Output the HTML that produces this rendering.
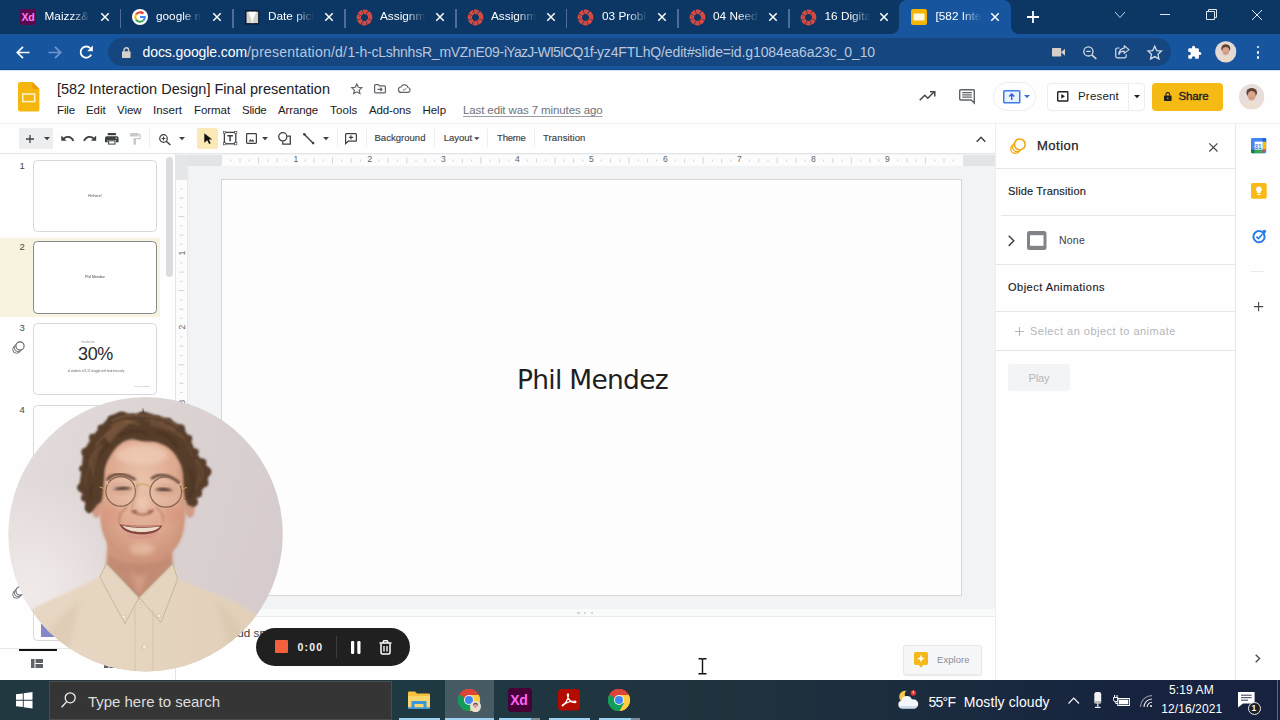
<!DOCTYPE html>
<html><head><meta charset="utf-8"><title>Slides</title>
<style>
*{box-sizing:border-box;margin:0;padding:0}
html,body{width:1280px;height:720px;overflow:hidden;background:#fefefe;font-family:"Liberation Sans",sans-serif;}
.a{position:absolute}
.t{position:absolute;white-space:nowrap;line-height:1.15}
svg{position:absolute;overflow:visible}
#tabbar{left:0;top:0;width:1280px;height:34px;background:#0c3663}
#navbar{left:0;top:34px;width:1280px;height:36.500px;background:#17569f}
#omni{left:108px;top:38px;width:1063px;height:28px;border-radius:14px;background:#15467f}
.sep{top:8.5px;width:1.5px;height:19px;background:#4f6d98}
#acttab{left:899px;top:0;width:112px;height:34px;background:#17569f;border-radius:8px 8px 0 0}
.tsep{top:129px;width:1px;height:18px;background:#eceef0}
.hl{height:1px;background:#e3e5e8}
</style></head><body>
<!-- CHROME -->
<div class="a" id="tabbar"></div>
<div class="a" id="acttab"></div>
<div class="a" id="navbar"></div>
<div class="a" id="omni"></div>
<div class="a sep" style="left:119.5px"></div>
<div class="a sep" style="left:232.0px"></div>
<div class="a sep" style="left:344.0px"></div>
<div class="a sep" style="left:455.2px"></div>
<div class="a sep" style="left:565.5px"></div>
<div class="a sep" style="left:677.0px"></div>
<div class="a sep" style="left:788.0px"></div>
<svg style="left:101.0px;top:13px" width="8" height="8" viewBox="0 0 8 8"><path d="M0.8 0.8L7.2 7.2M7.2 0.8L0.8 7.2" stroke="#fff" stroke-width="1.5" stroke-linecap="square"/></svg>
<svg style="left:213.0px;top:13px" width="8" height="8" viewBox="0 0 8 8"><path d="M0.8 0.8L7.2 7.2M7.2 0.8L0.8 7.2" stroke="#fff" stroke-width="1.5" stroke-linecap="square"/></svg>
<svg style="left:325.0px;top:13px" width="8" height="8" viewBox="0 0 8 8"><path d="M0.8 0.8L7.2 7.2M7.2 0.8L0.8 7.2" stroke="#fff" stroke-width="1.5" stroke-linecap="square"/></svg>
<svg style="left:436.0px;top:13px" width="8" height="8" viewBox="0 0 8 8"><path d="M0.8 0.8L7.2 7.2M7.2 0.8L0.8 7.2" stroke="#fff" stroke-width="1.5" stroke-linecap="square"/></svg>
<svg style="left:546.5px;top:13px" width="8" height="8" viewBox="0 0 8 8"><path d="M0.8 0.8L7.2 7.2M7.2 0.8L0.8 7.2" stroke="#fff" stroke-width="1.5" stroke-linecap="square"/></svg>
<svg style="left:658.0px;top:13px" width="8" height="8" viewBox="0 0 8 8"><path d="M0.8 0.8L7.2 7.2M7.2 0.8L0.8 7.2" stroke="#fff" stroke-width="1.5" stroke-linecap="square"/></svg>
<svg style="left:769.0px;top:13px" width="8" height="8" viewBox="0 0 8 8"><path d="M0.8 0.8L7.2 7.2M7.2 0.8L0.8 7.2" stroke="#fff" stroke-width="1.5" stroke-linecap="square"/></svg>
<svg style="left:880.0px;top:13px" width="8" height="8" viewBox="0 0 8 8"><path d="M0.8 0.8L7.2 7.2M7.2 0.8L0.8 7.2" stroke="#fff" stroke-width="1.5" stroke-linecap="square"/></svg>
<svg style="left:991.0px;top:13px" width="8" height="8" viewBox="0 0 8 8"><path d="M0.8 0.8L7.2 7.2M7.2 0.8L0.8 7.2" stroke="#fff" stroke-width="1.5" stroke-linecap="square"/></svg>
<div class="a" style="left:20px;top:9px;width:16px;height:15.600px;background:#5a0a4c;border-radius:2px"></div>
<span class="t" style="left:21.600px;top:10.800px;font-size:10.500px;font-weight:bold;color:#ff7df3;letter-spacing:-0.300px">Xd</span>
<svg style="left:132px;top:9px" width="16" height="16" viewBox="0 0 16 16"><circle cx="8" cy="8" r="8" fill="#fff"/>
<path d="M8 3.2a4.8 4.8 0 0 1 3.3 1.3" fill="none" stroke="#ea4335" stroke-width="2"/>
<path d="M11.3 4.5" fill="none"/>
<path d="M4.1 5.4A4.8 4.8 0 0 1 8 3.2a4.8 4.8 0 0 1 3.2 1.2" fill="none" stroke="#ea4335" stroke-width="2"/>
<path d="M4.1 10.6A4.8 4.8 0 0 1 4.1 5.4" fill="none" stroke="#fbbc05" stroke-width="2"/>
<path d="M11.4 11.4A4.8 4.8 0 0 1 4.1 10.6" fill="none" stroke="#34a853" stroke-width="2"/>
<path d="M8 8h4.8a4.8 4.8 0 0 1-1.4 3.4" fill="none" stroke="#4285f4" stroke-width="2"/></svg>
<svg style="left:244.800px;top:9.800px" width="14.200" height="14.600" viewBox="0 0 14.200 14.600"><rect width="14.200" height="14.600" rx="1" fill="#0c1a30"/><rect x="1.500" y="1.700" width="11.600" height="11.400" fill="#d5d1cb"/><path d="M3.300 1.700H11.400L7.800 10.500L6.800 10.500Z" fill="#fdfdfd"/><path d="M6.300 9H8.300V13.100H6.300Z" fill="#f1efec"/></svg>
<svg style="left:355.5px;top:8.5px" width="17" height="17" viewBox="-8.5 -8.5 17 17"><circle r="5.7" fill="none" stroke="#dc4a40" stroke-width="4.4" stroke-dasharray="3.88 0.6" transform="rotate(-20)"/><circle r="5.6" fill="none" stroke="#0c3663" stroke-width="0.7" stroke-dasharray="1.2 3.2" opacity=".55"/></svg>
<svg style="left:466.5px;top:8.5px" width="17" height="17" viewBox="-8.5 -8.5 17 17"><circle r="5.7" fill="none" stroke="#dc4a40" stroke-width="4.4" stroke-dasharray="3.88 0.6" transform="rotate(-20)"/><circle r="5.6" fill="none" stroke="#0c3663" stroke-width="0.7" stroke-dasharray="1.2 3.2" opacity=".55"/></svg>
<svg style="left:577.2px;top:8.5px" width="17" height="17" viewBox="-8.5 -8.5 17 17"><circle r="5.7" fill="none" stroke="#dc4a40" stroke-width="4.4" stroke-dasharray="3.88 0.6" transform="rotate(-20)"/><circle r="5.6" fill="none" stroke="#0c3663" stroke-width="0.7" stroke-dasharray="1.2 3.2" opacity=".55"/></svg>
<svg style="left:688.5px;top:8.5px" width="17" height="17" viewBox="-8.5 -8.5 17 17"><circle r="5.7" fill="none" stroke="#dc4a40" stroke-width="4.4" stroke-dasharray="3.88 0.6" transform="rotate(-20)"/><circle r="5.6" fill="none" stroke="#0c3663" stroke-width="0.7" stroke-dasharray="1.2 3.2" opacity=".55"/></svg>
<svg style="left:799.5px;top:8.5px" width="17" height="17" viewBox="-8.5 -8.5 17 17"><circle r="5.7" fill="none" stroke="#dc4a40" stroke-width="4.4" stroke-dasharray="3.88 0.6" transform="rotate(-20)"/><circle r="5.6" fill="none" stroke="#0c3663" stroke-width="0.7" stroke-dasharray="1.2 3.2" opacity=".55"/></svg>
<svg style="left:911px;top:9px" width="16" height="16" viewBox="0 0 16 16"><rect width="16" height="16" rx="2" fill="#f4b400"/><rect x="2.5" y="4.5" width="11" height="7" fill="#fff8e1"/></svg>
<svg style="left:1027px;top:11px" width="12" height="12" viewBox="0 0 12 12"><path d="M6 0V12M0 6H12" stroke="#fff" stroke-width="1.8"/></svg>
<svg style="left:1114.5px;top:11.5px" width="10" height="6" viewBox="0 0 10 6"><path d="M0 0L5 5.5L10 0" fill="none" stroke="#c5d2e3" stroke-width="1"/></svg>
<div class="a" style="left:1160px;top:14px;width:10px;height:1px;background:#dfe7f1"></div>
<svg style="left:1206px;top:9px" width="11" height="11" viewBox="0 0 11 11"><path d="M0.5 2.5H8.5V10.5H0.5Z M2.5 2.5V0.5H10.5V8.5H8.5" fill="none" stroke="#dfe7f1" stroke-width="1"/></svg>
<svg style="left:1252px;top:9.5px" width="10" height="10" viewBox="0 0 10 10"><path d="M0 0L10 10M10 0L0 10" stroke="#dfe7f1" stroke-width="1"/></svg>
<svg style="left:891px;top:26px" width="8" height="8" viewBox="0 0 8 8"><path d="M0 8H8V0A8 8 0 0 1 0 8Z" fill="#17569f"/></svg>
<svg style="left:1011px;top:26px" width="8" height="8" viewBox="0 0 8 8"><path d="M8 8H0V0A8 8 0 0 0 8 8Z" fill="#17569f"/></svg>
<svg style="left:15.5px;top:45.5px" width="14" height="13" viewBox="0 0 14 13"><path d="M13.5 6.5H1.5M7 0.8L1.3 6.5L7 12.2" fill="none" stroke="#fff" stroke-width="1.7"/></svg>
<svg style="left:47.5px;top:45.5px" width="14" height="13" viewBox="0 0 14 13"><path d="M0.5 6.5H12.5M7 0.8L12.7 6.5L7 12.2" fill="none" stroke="#6f95cd" stroke-width="1.7"/></svg>
<svg style="left:79px;top:45px" width="15" height="14" viewBox="0 0 15 14"><path d="M12.2 9.6A5.6 5.6 0 1 1 11.2 3.2" fill="none" stroke="#fff" stroke-width="1.8"/><path d="M13.8 0.6V6.2H8.2Z" fill="#fff"/></svg>
<svg style="left:122px;top:46.5px" width="9" height="11" viewBox="0 0 9 11"><rect x="0" y="4.2" width="8.6" height="6.8" rx="0.8" fill="#d6cfc9"/><path d="M2 4.5V3a2.3 2.3 0 0 1 4.6 0V4.5" fill="none" stroke="#d6cfc9" stroke-width="1.4"/></svg>
<svg style="left:1051.5px;top:48px" width="13" height="8.5" viewBox="0 0 13 8.5"><rect width="9.2" height="8.5" rx="0.8" fill="#d6cfc9"/><path d="M9 4.2L13 0.8V7.7Z" fill="#d6cfc9"/></svg>
<svg style="left:1082.5px;top:45.5px" width="14" height="13.5" viewBox="0 0 14 13.5"><circle cx="5.4" cy="5.4" r="4.6" fill="none" stroke="#d3dbe8" stroke-width="1.3"/><path d="M8.8 8.8L13.3 13" stroke="#d3dbe8" stroke-width="1.7"/><path d="M3.2 5.4H7.6" stroke="#d3dbe8" stroke-width="1.2"/></svg>
<svg style="left:1114.5px;top:45px" width="15" height="13.5" viewBox="0 0 15 13.5"><path d="M4.6 3H2.5A1.7 1.7 0 0 0 0.7 4.7V11A1.7 1.7 0 0 0 2.5 12.8H9.5A1.7 1.7 0 0 0 11.2 11V9.2" fill="none" stroke="#d3dbe8" stroke-width="1.2"/><path d="M9.2 0.8L14 4.6L9.2 8.4V6.1C6.4 6.1 4.7 7.2 3.8 9.4C4.1 5.9 6 3.5 9.2 3.1Z" fill="none" stroke="#d3dbe8" stroke-width="1.2" stroke-linejoin="round"/></svg>
<svg style="left:1146.5px;top:45px" width="15.5" height="14.5" viewBox="0 0 24 22.5"><path d="M12 1.8L15.1 8.6L22.4 9.4L17 14.4L18.5 21.6L12 18L5.5 21.6L7 14.4L1.6 9.4L8.9 8.6Z" fill="none" stroke="#d3dbe8" stroke-width="2" stroke-linejoin="miter"/></svg>
<svg style="left:1186.5px;top:44.5px" width="15" height="15" viewBox="0 0 24 24"><path d="M20.5 11H19V7c0-1.1-.9-2-2-2h-4V3.5a2.5 2.5 0 0 0-5 0V5H4c-1.1 0-2 .9-2 2v3.8h1.5a2.7 2.7 0 0 1 0 5.400H2V20c0 1.100.9 2 2 2h3.800v-1.500a2.700 2.700 0 0 1 5.400 0V22H17c1.100 0 2-.9 2-2v-4h1.500a2.500 2.500 0 0 0 0-5z" fill="#fff"/></svg>
<svg style="left:1215.4px;top:41.4px" width="21.6" height="21.6" viewBox="0 0 22 22"><defs><clipPath id="av1"><circle cx="11" cy="11" r="10.8"/></clipPath></defs><g clip-path="url(#av1)"><rect width="22" height="22" fill="#e3dad6"/><ellipse cx="11" cy="7.6" rx="4.6" ry="4.2" fill="#5e4433"/><ellipse cx="11" cy="10.2" rx="3.5" ry="4.3" fill="#d9a58c"/><path d="M8.6 6.8Q11 5.2 13.400 6.800L13.800 5.500Q11 3.600 8.200 5.500Z" fill="#5e4433"/><path d="M2.500 22C3 16.500 7 15.500 11 15.500S19 16.500 19.500 22Z" fill="#e9d9c6"/><path d="M9.300 11.600Q11 13 12.700 11.600Q11 12.300 9.300 11.600Z" fill="#fff" stroke="#b06a5a" stroke-width=".3"/></g></svg>
<div class="a" style="left:1256.6px;top:45.7px;width:2.8px;height:2.8px;border-radius:50%;background:#fff"></div>
<div class="a" style="left:1256.6px;top:50.800000000000004px;width:2.8px;height:2.8px;border-radius:50%;background:#fff"></div>
<div class="a" style="left:1256.6px;top:55.800000000000004px;width:2.8px;height:2.8px;border-radius:50%;background:#fff"></div>
<div class="a" style="left:0;top:69.400px;width:1280px;height:1px;background:#124a8c"></div><div class="a" style="left:0;top:70.400px;width:1280px;height:0.800px;background:#d5e3f5"></div>
<svg style="left:18px;top:81.800px" width="21.4" height="29.4" viewBox="0 0 21.4 29.4"><path d="M2.200 0H14.400L21.400 7V27.200A2.200 2.200 0 0 1 19.200 29.400H2.200A2.200 2.200 0 0 1 0 27.200V2.200A2.200 2.200 0 0 1 2.200 0Z" fill="#f5b70e"/><path d="M14.400 0L21.400 7H16.200A1.800 1.800 0 0 1 14.400 5.200Z" fill="#ef9a0a"/><rect x="4.700" y="12" width="12" height="7.600" fill="none" stroke="#fdf3d0" stroke-width="1.500"/></svg>
<svg style="left:351px;top:82.700px" width="11.600" height="11.200" viewBox="0 0 24 23"><path d="M12 2L15.100 8.800L22.400 9.600L17 14.600L18.500 21.800L12 18.200L5.500 21.800L7 14.600L1.600 9.600L8.900 8.800Z" fill="none" stroke="#5f6368" stroke-width="2.400"/></svg>
<svg style="left:374px;top:83.500px" width="12" height="9.500" viewBox="0 0 12 9.500"><path d="M0.600 1.600A1 1 0 0 1 1.600 0.600H4.300L5.500 1.800H10.400A1 1 0 0 1 11.400 2.800V7.900A1 1 0 0 1 10.400 8.900H1.600A1 1 0 0 1 0.600 7.900Z" fill="none" stroke="#5f6368" stroke-width="1.200"/><path d="M3.500 5.400H8M6.300 3.600L8.100 5.400L6.300 7.200" fill="none" stroke="#5f6368" stroke-width="1.100"/></svg>
<svg style="left:398px;top:84px" width="13" height="9" viewBox="0 0 13 9"><path d="M3.300 8.400A2.700 2.700 0 0 1 3 3A3.700 3.700 0 0 1 10 3.500A2.500 2.500 0 0 1 10.200 8.400Z" fill="none" stroke="#5f6368" stroke-width="1.200"/><path d="M4.800 5.300L6 6.400L8.200 4.200" fill="none" stroke="#5f6368" stroke-width="1"/></svg>
<svg style="left:918.500px;top:91px" width="16.500" height="10" viewBox="0 0 16.500 10"><path d="M0.700 9.300L5.800 4.200L8.800 7.200L15 1" fill="none" stroke="#444746" stroke-width="1.500"/><path d="M11 0.700H15.800V5.500" fill="none" stroke="#444746" stroke-width="1.500"/></svg>
<svg style="left:959.400px;top:88.900px" width="16" height="15" viewBox="0 0 16 15"><path d="M1.600 0.700H14.400A0.900 0.900 0 0 1 15.300 1.600V14L12.200 11H1.600A0.900 0.900 0 0 1 0.700 10.100V1.600A0.900 0.900 0 0 1 1.600 0.700Z" fill="none" stroke="#5f6368" stroke-width="1.400"/><path d="M3.200 3.700H12.800M3.200 5.900H12.800M3.200 8.100H12.800" stroke="#5f6368" stroke-width="1.200"/></svg>
<div class="a" style="left:993px;top:82.300px;width:42.600px;height:28.700px;border:1px solid #ebedf0;border-radius:14.500px;background:#fff"></div>
<svg style="left:1002.700px;top:90.400px" width="17.500" height="13.500" viewBox="0 0 17.500 13.500"><rect x="0.750" y="0.750" width="16" height="12" rx="0.800" fill="#eaf1fe" stroke="#3c7be8" stroke-width="1.500"/><path d="M8.750 10V4.200M6.200 6.500L8.750 3.900L11.300 6.500" fill="none" stroke="#2a63d4" stroke-width="1.400"/></svg>
<svg style="left:1024.200px;top:95.300px" width="6" height="3.200" viewBox="0 0 6 3.200"><path d="M0 0H6L3 3.200Z" fill="#3c78dc"/></svg>
<div class="a" style="left:1046.500px;top:83px;width:98px;height:28px;border:1px solid #ebedf0;border-radius:4px;background:#fff"></div>
<div class="a" style="left:1128px;top:84px;width:1px;height:26px;background:#eceef1"></div>
<svg style="left:1056.500px;top:91px" width="11.500" height="10.700" viewBox="0 0 11.500 10.700"><rect x="0.700" y="0.700" width="10.100" height="9.300" rx="0.600" fill="none" stroke="#202124" stroke-width="1.400"/><path d="M4.300 3L8 5.350L4.300 7.700Z" fill="#202124"/></svg>
<svg style="left:1133.600px;top:95.200px" width="6" height="3.200" viewBox="0 0 6 3.200"><path d="M0 0H6L3 3.200Z" fill="#202124"/></svg>
<div class="a" style="left:1152.200px;top:83px;width:70.400px;height:27.800px;border-radius:4px;background:#f5ba14"></div>
<svg style="left:1163.800px;top:91.600px" width="7.600" height="9" viewBox="0 0 7.600 9"><rect x="0" y="3.400" width="7.600" height="5.600" rx="0.700" fill="#202124"/><path d="M1.900 3.600V2.500a1.900 1.900 0 0 1 3.800 0V3.600" fill="none" stroke="#202124" stroke-width="1.100"/><circle cx="3.800" cy="6.200" r="0.700" fill="#f5ba14"/></svg>
<svg style="left:1238.800px;top:84.400px" width="25.400" height="25.400" viewBox="0 0 22 22"><defs><clipPath id="av2"><circle cx="11" cy="11" r="11"/></clipPath></defs><g clip-path="url(#av2)"><rect width="22" height="22" fill="#e7dedb"/><ellipse cx="11" cy="7.600" rx="4.600" ry="4.200" fill="#5e4433"/><ellipse cx="11" cy="10.200" rx="3.500" ry="4.300" fill="#d9a58c"/><path d="M8.600 6.800Q11 5.200 13.400 6.800L13.800 5.500Q11 3.600 8.200 5.500Z" fill="#5e4433"/><path d="M2.500 22C3 16.500 7 15.500 11 15.500S19 16.500 19.500 22Z" fill="#ecdfd0"/><path d="M9.300 11.600Q11 13 12.700 11.600Q11 12.300 9.300 11.600Z" fill="#fff" stroke="#b06a5a" stroke-width=".3"/></g></svg>
<div class="a hl" style="left:0;top:122.500px;width:1280px;background:#eef0f2"></div>
<div class="a" style="left:19.200px;top:128px;width:33.800px;height:20.700px;background:#eceef0;border-radius:2px"></div>
<svg style="left:25.500px;top:134.600px" width="8" height="8" viewBox="0 0 8 8"><path d="M4 0V8M0 4H8" stroke="#3c4043" stroke-width="1.300"/></svg>
<svg style="left:44.1px;top:137.1px" width="6" height="3.200" viewBox="0 0 6 3.200"><path d="M0 0H6L3 3.200Z" fill="#3c4043"/></svg>
<svg style="left:60.500px;top:135.400px" width="13.500" height="6.500" viewBox="0 0 13.500 6.500"><path d="M2.500 3.600C5.500 0.800 10.300 1.200 12.500 6" fill="none" stroke="#3c4043" stroke-width="1.700"/><path d="M0.300 0.500V5.800H5.600Z" fill="#3c4043"/></svg>
<svg style="left:82.500px;top:135.400px" width="13.500" height="6.500" viewBox="0 0 13.500 6.500"><path d="M11 3.600C8 0.800 3.200 1.200 1 6" fill="none" stroke="#3c4043" stroke-width="1.700"/><path d="M13.200 0.500V5.800H7.900Z" fill="#3c4043"/></svg>
<svg style="left:105.400px;top:132.700px" width="13.600" height="11.600" viewBox="0 0 13.600 11.600"><rect x="2.700" y="0" width="8.200" height="2.200" fill="#3c4043"/><path d="M1.800 3.200H11.800A1.800 1.800 0 0 1 13.600 5V9.200H10.900V6.900H2.700V9.200H0V5A1.800 1.800 0 0 1 1.800 3.200Z" fill="#3c4043"/><rect x="3.600" y="7.800" width="6.400" height="3.300" fill="none" stroke="#3c4043" stroke-width="1"/><circle cx="11.300" cy="5.200" r="0.600" fill="#fff"/></svg>
<svg style="left:129.500px;top:132.700px" width="11" height="11.200" viewBox="0 0 11 11.200"><rect x="0" y="0" width="8.500" height="3.600" rx="0.500" fill="#c6c9cc"/><path d="M8.500 1.500H10.300V5.600H5.200V11.200H3.900" fill="none" stroke="#c6c9cc" stroke-width="1.200"/><rect x="3.500" y="5" width="2.400" height="6.200" fill="#c6c9cc"/></svg>
<div class="a tsep" style="left:148.500px"></div>
<svg style="left:158.900px;top:133.500px" width="12" height="11.500" viewBox="0 0 12 11.500"><circle cx="4.500" cy="4.500" r="3.800" fill="none" stroke="#3c4043" stroke-width="1.200"/><path d="M7.300 7.300L11.400 11" stroke="#3c4043" stroke-width="1.500"/><path d="M2.600 4.500H6.400M4.500 2.600V6.400" stroke="#3c4043" stroke-width="1"/></svg>
<svg style="left:179.2px;top:137.1px" width="6" height="3.200" viewBox="0 0 6 3.200"><path d="M0 0H6L3 3.200Z" fill="#3c4043"/></svg>
<div class="a" style="left:197.400px;top:128.200px;width:20.500px;height:20.500px;background:#fbe9b5;border-radius:2px"></div>
<svg style="left:204.400px;top:133px" width="8.500" height="11.200" viewBox="0 0 8.500 11.200"><path d="M0.300 0.200L8.200 6.500H4.900L6.700 10.300L5.100 11L3.300 7.200L0.300 9.800Z" fill="#111"/></svg>
<svg style="left:223px;top:131.400px" width="14.200" height="14.200" viewBox="0 0 14.200 14.200"><rect x="1.400" y="1.400" width="11.400" height="11.400" fill="none" stroke="#3c4043" stroke-width="1.300"/><rect x="0.300" y="0.300" width="2.200" height="2.200" fill="#fff" stroke="#3c4043" stroke-width="0.600"/><rect x="11.700" y="0.300" width="2.200" height="2.200" fill="#fff" stroke="#3c4043" stroke-width="0.600"/><rect x="0.300" y="11.700" width="2.200" height="2.200" fill="#fff" stroke="#3c4043" stroke-width="0.600"/><rect x="11.700" y="11.700" width="2.200" height="2.200" fill="#fff" stroke="#3c4043" stroke-width="0.600"/><path d="M4.300 4.700H9.900M7.100 4.700V10.300" stroke="#3c4043" stroke-width="1.500"/></svg>
<svg style="left:246.100px;top:133px" width="11" height="11" viewBox="0 0 11 11"><rect x="0.600" y="0.600" width="9.800" height="9.800" rx="0.800" fill="none" stroke="#3c4043" stroke-width="1.200"/><path d="M2.500 8.400L4.300 6L5.500 7.500L6.700 6.300L8.500 8.400Z" fill="#3c4043"/></svg>
<svg style="left:262.3px;top:137.1px" width="6" height="3.200" viewBox="0 0 6 3.200"><path d="M0 0H6L3 3.200Z" fill="#3c4043"/></svg>
<svg style="left:277.600px;top:132px" width="13" height="12.800" viewBox="0 0 13 12.800"><circle cx="4.800" cy="4.800" r="4.100" fill="none" stroke="#3c4043" stroke-width="1.300"/><path d="M9.300 4.200H12.300V12.100H4.800V9.500" fill="none" stroke="#3c4043" stroke-width="1.300"/></svg>
<svg style="left:302.800px;top:133px" width="11.400" height="11.400" viewBox="0 0 11.400 11.400"><path d="M1.200 1.200L10.200 10.200" stroke="#3c4043" stroke-width="1.500"/><circle cx="1.300" cy="1.300" r="1.300" fill="#3c4043"/><circle cx="10.100" cy="10.100" r="1.300" fill="#3c4043"/></svg>
<svg style="left:323.1px;top:137.1px" width="6" height="3.200" viewBox="0 0 6 3.200"><path d="M0 0H6L3 3.200Z" fill="#3c4043"/></svg>
<div class="a tsep" style="left:336.500px"></div>
<svg style="left:345.100px;top:133px" width="12" height="11" viewBox="0 0 12 11"><path d="M1.400 0.600H10.600A0.800 0.800 0 0 1 11.400 1.400V7.400A0.800 0.800 0 0 1 10.600 8.200H3.200L0.600 10.600V1.400A0.800 0.800 0 0 1 1.400 0.600Z" fill="none" stroke="#3c4043" stroke-width="1.200"/><path d="M6 2.300V6.500M3.900 4.400H8.100" stroke="#3c4043" stroke-width="1.100"/></svg>
<div class="a tsep" style="left:366.0px"></div>
<div class="a tsep" style="left:433.5px"></div>
<div class="a tsep" style="left:487.0px"></div>
<div class="a tsep" style="left:534.0px"></div>
<svg style="left:474.45px;top:137.1px" width="5.5" height="3.200" viewBox="0 0 6 3.200"><path d="M0 0H6L3 3.200Z" fill="#3c4043"/></svg>
<svg style="left:975.700px;top:135.500px" width="10" height="6.500" viewBox="0 0 10 6.500"><path d="M0.700 5.800L5 1.300L9.300 5.800" fill="none" stroke="#444746" stroke-width="1.600"/></svg>
<div class="a hl" style="left:0;top:153.300px;width:995px;background:#e4e6e9"></div>
<div class="a" style="left:175px;top:154px;width:1px;height:526px;background:#e4e6e9"></div>
<div class="a" style="left:0;top:237.500px;width:160.400px;height:79.500px;background:#f7f3df"></div>
<div class="a" style="left:33.300px;top:160px;width:123.500px;height:72.300px;border:1.300px solid #d6d8db;border-radius:4.500px;background:#fefefe"></div>
<div class="a" style="left:33.300px;top:241.300px;width:123.500px;height:73px;border:1.800px solid #86898d;border-radius:4.500px;background:#fefefe"></div>
<div class="a" style="left:33.300px;top:323.300px;width:123.500px;height:72.200px;border:1.300px solid #d6d8db;border-radius:4.500px;background:#fefefe"></div>
<div class="a" style="left:33.300px;top:405.200px;width:123.500px;height:72.200px;border:1.300px solid #d6d8db;border-radius:4.500px;background:#fefefe"></div>
<div class="a" style="left:33.300px;top:487px;width:123.500px;height:72.200px;border:1.300px solid #d6d8db;border-radius:4.500px;background:#fefefe"></div>
<div class="a" style="left:33.300px;top:568.700px;width:123.500px;height:72.200px;border:1.300px solid #d6d8db;border-radius:4.500px;background:#fefefe"></div>
<span class="t" style="left:-205px;width:600px;text-align:center;top:187.5px;font-size:16px;line-height:16px;color:#444;transform:scale(0.225);transform-origin:50% 50%">Hi there!</span>
<span class="t" style="left:-205px;width:600px;text-align:center;top:268.8px;font-size:16px;line-height:16px;color:#444;transform:scale(0.225);transform-origin:50% 50%">Phil Mendez</span>
<span class="t" style="left:-212.5px;width:600px;text-align:center;top:334px;font-size:16px;line-height:16px;color:#999;transform:scale(0.1625);transform-origin:50% 50%">Introduction</span>
<span class="t" style="left:-204.5px;width:600px;text-align:center;top:362.5px;font-size:16px;line-height:16px;color:#666;transform:scale(0.16875);transform-origin:50% 50%">of students in K-12 struggle with food insecurity</span>
<span class="t" style="left:-158.5px;width:600px;text-align:center;top:378.3px;font-size:16px;line-height:16px;color:#aaa;transform:scale(0.15);transform-origin:50% 50%">Source citation</span>
<div class="a" style="left:165.600px;top:157.300px;width:7.400px;height:119.700px;border-radius:3.700px;background:#dadce0"></div>
<svg style="left:11.5px;top:340.5px" width="13" height="13" viewBox="0 0 13 13"><circle cx="4.600" cy="8.400" r="3.900" fill="#fff" stroke="#5f6368" stroke-width="0.900"/><circle cx="6.200" cy="6.800" r="3.900" fill="#fff" stroke="#5f6368" stroke-width="0.900"/><circle cx="8" cy="5" r="4.100" fill="#fff" stroke="#5f6368" stroke-width="1.100"/></svg>
<svg style="left:11.5px;top:585.5px" width="13" height="13" viewBox="0 0 13 13"><circle cx="4.600" cy="8.400" r="3.900" fill="#fff" stroke="#5f6368" stroke-width="0.900"/><circle cx="6.200" cy="6.800" r="3.900" fill="#fff" stroke="#5f6368" stroke-width="0.900"/><circle cx="8" cy="5" r="4.100" fill="#fff" stroke="#5f6368" stroke-width="1.100"/></svg>
<div class="a" style="left:40.800px;top:624px;width:30px;height:13px;background:#8289c6"></div><div class="a hl" style="left:0;top:648.300px;width:175px;background:#e4e6e9"></div><div class="a" style="left:19px;top:649px;width:38px;height:2.300px;background:#111"></div>
<svg style="left:30.500px;top:658.500px" width="12" height="9" viewBox="0 0 12 9"><path d="M0 0H3.500V9H0ZM4.500 0H12V4H4.500ZM4.500 5H12V9H4.500Z" fill="#5f6368"/></svg>
<svg style="left:104px;top:658.500px" width="10" height="9" viewBox="0 0 10 9"><path d="M0 0H4.500V4H0ZM5.500 0H10V4H5.500ZM0 5H4.500V9H0ZM5.500 5H10V9H5.500Z" fill="#5f6368"/></svg>
<div class="a" style="left:176px;top:154px;width:818.500px;height:454.500px;background:#f1f3f4"></div>
<div class="a" style="left:176px;top:155px;width:11px;height:25px;background:#e4e6e8"></div>
<div class="a" style="left:187px;top:155px;width:808px;height:10.600px;background:#e2e4e6"></div>
<div class="a" style="left:222px;top:155px;width:740.500px;height:10.600px;background:#fcfcfc"></div>
<div class="a" style="left:176px;top:180px;width:10.500px;height:428.500px;background:#e2e4e6"></div>
<div class="a" style="left:176px;top:180px;width:10.500px;height:416.500px;background:#fcfcfc"></div>
<div class="a" style="left:186.500px;top:166px;width:1px;height:442.500px;background:#e6e8ea"></div>
<svg style="left:0;top:0" width="1280" height="720" viewBox="0 0 1280 720"><g stroke="#c6c8cb" stroke-width="0.800"><path d="M230.8 159.5V161.5"/><path d="M240.0 158.5V162.5"/><path d="M249.3 159.5V161.5"/><path d="M258.6 157.5V163.5"/><path d="M267.8 159.5V161.5"/><path d="M277.1 158.5V162.5"/><path d="M286.3 159.5V161.5"/><path d="M304.9 159.5V161.5"/><path d="M314.1 158.5V162.5"/><path d="M323.4 159.5V161.5"/><path d="M332.6 157.5V163.5"/><path d="M341.9 159.5V161.5"/><path d="M351.2 158.5V162.5"/><path d="M360.4 159.5V161.5"/><path d="M379.0 159.5V161.5"/><path d="M388.2 158.5V162.5"/><path d="M397.5 159.5V161.5"/><path d="M406.8 157.5V163.5"/><path d="M416.0 159.5V161.5"/><path d="M425.3 158.5V162.5"/><path d="M434.5 159.5V161.5"/><path d="M453.1 159.5V161.5"/><path d="M462.3 158.5V162.5"/><path d="M471.6 159.5V161.5"/><path d="M480.8 157.5V163.5"/><path d="M490.1 159.5V161.5"/><path d="M499.4 158.5V162.5"/><path d="M508.6 159.5V161.5"/><path d="M527.2 159.5V161.5"/><path d="M536.4 158.5V162.5"/><path d="M545.7 159.5V161.5"/><path d="M555.0 157.5V163.5"/><path d="M564.2 159.5V161.5"/><path d="M573.5 158.5V162.5"/><path d="M582.7 159.5V161.5"/><path d="M601.3 159.5V161.5"/><path d="M610.5 158.5V162.5"/><path d="M619.8 159.5V161.5"/><path d="M629.0 157.5V163.5"/><path d="M638.3 159.5V161.5"/><path d="M647.6 158.5V162.5"/><path d="M656.8 159.5V161.5"/><path d="M675.4 159.5V161.5"/><path d="M684.6 158.5V162.5"/><path d="M693.9 159.5V161.5"/><path d="M703.1 157.5V163.5"/><path d="M712.4 159.5V161.5"/><path d="M721.7 158.5V162.5"/><path d="M730.9 159.5V161.5"/><path d="M749.5 159.5V161.5"/><path d="M758.7 158.5V162.5"/><path d="M768.0 159.5V161.5"/><path d="M777.2 157.5V163.5"/><path d="M786.5 159.5V161.5"/><path d="M795.8 158.5V162.5"/><path d="M805.0 159.5V161.5"/><path d="M823.6 159.5V161.5"/><path d="M832.8 158.5V162.5"/><path d="M842.1 159.5V161.5"/><path d="M851.3 157.5V163.5"/><path d="M860.6 159.5V161.5"/><path d="M869.9 158.5V162.5"/><path d="M879.1 159.5V161.5"/><path d="M897.7 159.5V161.5"/><path d="M906.9 158.5V162.5"/><path d="M916.2 159.5V161.5"/><path d="M925.4 157.5V163.5"/><path d="M934.7 159.5V161.5"/><path d="M944.0 158.5V162.5"/><path d="M953.2 159.5V161.5"/><path d="M180.5 188.8H182.5"/><path d="M179.5 198.0H183.5"/><path d="M180.5 207.3H182.5"/><path d="M178.5 216.6H184.5"/><path d="M180.5 225.8H182.5"/><path d="M179.5 235.1H183.5"/><path d="M180.5 244.3H182.5"/><path d="M180.5 262.9H182.5"/><path d="M179.5 272.1H183.5"/><path d="M180.5 281.4H182.5"/><path d="M178.5 290.6H184.5"/><path d="M180.5 299.9H182.5"/><path d="M179.5 309.2H183.5"/><path d="M180.5 318.4H182.5"/><path d="M180.5 337.0H182.5"/><path d="M179.5 346.2H183.5"/><path d="M180.5 355.5H182.5"/><path d="M178.5 364.8H184.5"/><path d="M180.5 374.0H182.5"/><path d="M179.5 383.3H183.5"/><path d="M180.5 392.5H182.5"/><path d="M180.5 411.1H182.5"/><path d="M179.5 420.3H183.5"/><path d="M180.5 429.6H182.5"/><path d="M178.5 438.8H184.5"/><path d="M180.5 448.1H182.5"/><path d="M179.5 457.4H183.5"/><path d="M180.5 466.6H182.5"/><path d="M180.5 485.2H182.5"/><path d="M179.5 494.4H183.5"/><path d="M180.5 503.7H182.5"/><path d="M178.5 513.0H184.5"/><path d="M180.5 522.2H182.5"/><path d="M179.5 531.5H183.5"/><path d="M180.5 540.7H182.5"/><path d="M180.5 559.3H182.5"/><path d="M179.5 568.5H183.5"/><path d="M180.5 577.8H182.5"/><path d="M178.5 587.0H184.5"/></g></svg>
<span class="t" style="left:171.7px;width:20px;text-align:center;top:248.4px;font-size:8.500px;line-height:10px;color:#5f6368;transform:rotate(-90deg)">1</span>
<span class="t" style="left:171.7px;width:20px;text-align:center;top:322.3px;font-size:8.500px;line-height:10px;color:#5f6368;transform:rotate(-90deg)">2</span>
<span class="t" style="left:171.7px;width:20px;text-align:center;top:396.5px;font-size:8.500px;line-height:10px;color:#5f6368;transform:rotate(-90deg)">3</span>
<span class="t" style="left:171.7px;width:20px;text-align:center;top:470.6px;font-size:8.500px;line-height:10px;color:#5f6368;transform:rotate(-90deg)">4</span>
<span class="t" style="left:171.7px;width:20px;text-align:center;top:544.7px;font-size:8.500px;line-height:10px;color:#5f6368;transform:rotate(-90deg)">5</span>
<div class="a" style="left:221px;top:179.300px;width:741.400px;height:417.200px;background:#fdfdfd;border:1px solid #d4d6d8"></div>
<div class="a" style="left:176px;top:608.500px;width:818.500px;height:8px;background:#f9fafa"></div>
<div class="a" style="left:577.3px;top:611.600px;width:2.400px;height:2.400px;border-radius:50%;background:#c9ccd0"></div>
<div class="a" style="left:584.0px;top:611.600px;width:2.400px;height:2.400px;border-radius:50%;background:#c9ccd0"></div>
<div class="a" style="left:590.8px;top:611.600px;width:2.400px;height:2.400px;border-radius:50%;background:#c9ccd0"></div>
<div class="a hl" style="left:176px;top:616px;width:818.500px;background:#e8eaec"></div>
<div class="a" style="left:902.500px;top:645.300px;width:79px;height:29.700px;background:#f6f7f8;border:1px solid #e6e8ea;border-radius:3px;box-shadow:0 0.500px 1px rgba(0,0,0,.08)"></div>
<svg style="left:914px;top:652.200px" width="14" height="15.800" viewBox="0 0 13 14" preserveAspectRatio="none"><path d="M1.500 0H11.500A1.500 1.500 0 0 1 13 1.500V10A1.500 1.500 0 0 1 11.500 11.500H8.500L6.500 14L4.500 11.500H1.500A1.500 1.500 0 0 1 0 10V1.500A1.500 1.500 0 0 1 1.500 0Z" fill="#f4b81a"/><path d="M6.500 2.300L7.500 4.800L10 5.800L7.500 6.800L6.500 9.300L5.500 6.800L3 5.800L5.500 4.800Z" fill="#fff"/></svg>
<svg style="left:698px;top:658px" width="9" height="16.500" viewBox="0 0 9 16.500"><path d="M0.500 0.700H3.500Q4.500 0.700 4.500 1.700Q4.500 0.700 5.500 0.700H8.500M0.500 15.800H3.500Q4.500 15.800 4.500 14.800Q4.500 15.800 5.500 15.800H8.500M4.500 1.500V15" fill="none" stroke="#111" stroke-width="1.400"/></svg>
<div class="a" style="left:995px;top:124px;width:240.500px;height:556px;background:#fefefe;border-left:1px solid #eceef0;border-right:1px solid #e6e8ea"></div>
<div class="a hl" style="left:995px;top:167.5px;width:240.5px;background:#e4e6e9"></div>
<div class="a hl" style="left:1001px;top:214.5px;width:234.5px;background:#e4e6e9"></div>
<div class="a hl" style="left:995px;top:264.0px;width:240.5px;background:#e4e6e9"></div>
<div class="a hl" style="left:995px;top:310.5px;width:240.5px;background:#e4e6e9"></div>
<div class="a hl" style="left:995px;top:350.0px;width:240.5px;background:#e4e6e9"></div>
<svg style="left:1009.500px;top:137.600px" width="16.200" height="16.200" viewBox="0 0 16.200 16.200"><circle cx="5.400" cy="10.800" r="4.600" fill="#fff" stroke="#f2a60d" stroke-width="1.300"/><circle cx="7.200" cy="9" r="4.600" fill="#fff" stroke="#f2a60d" stroke-width="1.300"/><circle cx="9.800" cy="6.400" r="5.400" fill="#fff" stroke="#f2a60d" stroke-width="1.600"/></svg>
<svg style="left:1208.800px;top:142.600px" width="8.800" height="8.800" viewBox="0 0 8.800 8.800"><path d="M0.300 0.300L8.500 8.500M8.500 0.300L0.300 8.500" stroke="#444746" stroke-width="1.200"/></svg>
<svg style="left:1008.300px;top:234.600px" width="6.600" height="11.600" viewBox="0 0 6.600 11.600"><path d="M0.700 0.700L5.800 5.800L0.700 10.900" fill="none" stroke="#444746" stroke-width="1.500"/></svg>
<svg style="left:1027.200px;top:231.300px" width="19.500" height="19" viewBox="0 0 19.500 19"><rect width="19.500" height="19" rx="2.500" fill="#808387"/><rect x="3" y="4.200" width="13.500" height="10.600" fill="#fff"/></svg>
<svg style="left:1014.500px;top:326.500px" width="9" height="9" viewBox="0 0 9 9"><path d="M4.500 0V9M0 4.500H9" stroke="#b4b7bb" stroke-width="1.100"/></svg>
<div class="a" style="left:1007.500px;top:364.400px;width:62.300px;height:26.200px;background:#f3f4f5;border-radius:3px"></div>
<svg style="left:1250.700px;top:138.400px" width="15.200" height="15.200" viewBox="0 0 15.200 15.200"><rect x="0" y="0" width="15.200" height="15.200" rx="1.500" fill="#4285f4"/><rect x="11.600" y="3.600" width="3.600" height="8" fill="#fbbc04"/><rect x="3.600" y="11.600" width="8" height="3.600" fill="#34a853"/><path d="M11.600 11.600H15.200L11.600 15.200Z" fill="#ea4335"/><path d="M0 11.600H3.600V15.200H1.500A1.500 1.500 0 0 1 0 13.700Z" fill="#188038"/><path d="M11.600 0H13.700A1.500 1.500 0 0 1 15.200 1.500V3.600H11.600Z" fill="#1967d2"/><rect x="3.600" y="3.600" width="8" height="8" fill="#fff"/></svg>
<span class="t" style="left:1254.600px;top:142.700px;font-size:6.500px;line-height:7px;font-weight:bold;color:#4285f4;letter-spacing:-0.300px">31</span>
<svg style="left:1250.700px;top:182.800px" width="15.700" height="15.700" viewBox="0 0 15.700 15.700"><rect width="15.700" height="15.700" rx="1.800" fill="#f9b916"/><path d="M7.850 3.400A3 3 0 0 1 9.600 8.800V10H6.100V8.800A3 3 0 0 1 7.850 3.400Z" fill="#fff"/><rect x="6.300" y="10.800" width="3.100" height="1.300" fill="#fff"/></svg>
<svg style="left:1251.500px;top:228.500px" width="15" height="14.500" viewBox="0 0 15 14.500"><circle cx="7" cy="7.700" r="5.600" fill="none" stroke="#2a7de1" stroke-width="2"/><path d="M4.400 7.600L6.400 9.600L10.400 5.200" fill="none" stroke="#2a7de1" stroke-width="1.700"/><circle cx="12.300" cy="2.600" r="1.800" fill="#2a7de1"/></svg>
<div class="a" style="left:1251px;top:270.500px;width:12.500px;height:1px;background:#e8eaed"></div>
<svg style="left:1254px;top:302px" width="9.200" height="9.200" viewBox="0 0 9.200 9.200"><path d="M4.600 0V9.200M0 4.600H9.200" stroke="#444746" stroke-width="1.100"/></svg>
<svg style="left:1254.500px;top:653.500px" width="5.500" height="9" viewBox="0 0 5.500 9"><path d="M0.700 0.700L4.600 4.500L0.700 8.300" fill="none" stroke="#444746" stroke-width="1.300"/></svg>
<!-- BOTTOM -->
<div class="a" style="left:0;top:680px;width:1280px;height:40px;background:linear-gradient(to right,#223840 0%,#1f3943 33%,#1f323d 58%,#1a2a3f 76%,#16223e 90%,#16223e 100%)"></div>
<svg style="left:16px;top:692px" width="16.500" height="16.500" viewBox="0 0 16.500 16.500"><path d="M0 2.300L6.800 1.400V7.800H0ZM7.700 1.250L16.500 0V7.800H7.700ZM0 8.700H6.800V15.100L0 14.200ZM7.700 8.700H16.500V16.500L7.700 15.250Z" fill="#fff"/></svg>
<div class="a" style="left:48.500px;top:680.500px;width:343px;height:39.500px;background:#353535;border:1px solid #4a4d4e"></div>
<svg style="left:60.500px;top:692px" width="15" height="16" viewBox="0 0 15 16"><circle cx="9.200" cy="5.800" r="5" fill="none" stroke="#f0f0f0" stroke-width="1.300"/><path d="M5.700 9.600L0.600 15.200" stroke="#f0f0f0" stroke-width="1.400"/></svg>
<svg style="left:408.400px;top:690.800px" width="22" height="18" viewBox="0 0 22 18"><path d="M0 1.500A1 1 0 0 1 1 0.500H7L9 2.500H21A1 1 0 0 1 22 3.500V17H0Z" fill="#f6bf3c"/><path d="M0 5H22V17H0Z" fill="#fbd76a"/><path d="M3.500 10H18.500V18H3.500Z" fill="#3a96dd"/><path d="M6.500 13H15.500V18H6.500Z" fill="#fbd76a"/><path d="M0 16.300H22V18H0Z" fill="#3a96dd"/></svg>
<div class="a" style="left:445.200px;top:680px;width:48.600px;height:40px;background:#465b63"></div>
<svg style="left:458px;top:688.8px" width="22" height="22" viewBox="-11 -11 22 22"><circle r="11" fill="#db4437"/><path d="M0 0L-9.530 -5.500A11 11 0 0 0 0 11Z" fill="#0f9d58"/><path d="M0 0L0 11A11 11 0 0 0 9.530 -5.500Z" fill="#ffcd40"/><path d="M0 0L-9.530 -5.500A11 11 0 0 1 9.530 -5.500Z" fill="#db4437"/><path d="M0 -5L9.700 -5A11 11 0 0 1 5 9.500Z" fill="#ffcd40"/><path d="M-4.330 2.500L-9.530 -5.500A11 11 0 0 0 0.500 11L5 3Z" fill="#0f9d58"/><path d="M-4.330 -2.500L-9.400 -5.700A11 11 0 0 1 9.700 -5L0 -5Z" fill="#db4437"/><circle r="5" fill="#f1f1f1"/><circle r="4" fill="#4285f4"/></svg>
<svg style="left:469.500px;top:700.500px" width="11" height="11" viewBox="0 0 22 22"><defs><clipPath id="av3"><circle cx="11" cy="11" r="11"/></clipPath></defs><g clip-path="url(#av3)"><rect width="22" height="22" fill="#e7dedb"/><ellipse cx="11" cy="7.600" rx="4.600" ry="4.200" fill="#5e4433"/><ellipse cx="11" cy="10.200" rx="3.500" ry="4.300" fill="#d9a58c"/><path d="M2.500 22C3 16.500 7 15.500 11 15.500S19 16.500 19.500 22Z" fill="#ecdfd0"/></g></svg>
<div class="a" style="left:507.500px;top:688px;width:24px;height:23.700px;border-radius:3.500px;background:#470137"></div>
<span class="t" style="left:510.300px;top:692.300px;font-size:14px;line-height:16px;font-weight:bold;color:#ff61f6;letter-spacing:-0.500px">Xd</span>
<svg style="left:558.300px;top:688.500px" width="22" height="21.500" viewBox="0 0 22 21.500"><rect width="22" height="21.500" rx="3.500" fill="#b30b00"/><path d="M4.800 15.800C7.500 14.800 10 10.500 10.500 6.200C10.700 4.600 9.300 4.600 9.400 6.300C9.700 10 13.500 13.800 17 13.600C18.500 13.400 18 12 16.500 12.100C12.500 12.200 7.500 14 5.200 16.400C4.200 17.400 3.800 16.300 4.800 15.800Z" fill="none" stroke="#fff" stroke-width="1.300" stroke-linejoin="round"/></svg>
<svg style="left:608.1px;top:689px" width="22" height="22" viewBox="-11 -11 22 22"><circle r="11" fill="#db4437"/><path d="M0 0L-9.530 -5.500A11 11 0 0 0 0 11Z" fill="#0f9d58"/><path d="M0 0L0 11A11 11 0 0 0 9.530 -5.500Z" fill="#ffcd40"/><path d="M0 0L-9.530 -5.500A11 11 0 0 1 9.530 -5.500Z" fill="#db4437"/><path d="M0 -5L9.700 -5A11 11 0 0 1 5 9.500Z" fill="#ffcd40"/><path d="M-4.330 2.500L-9.530 -5.500A11 11 0 0 0 0.500 11L5 3Z" fill="#0f9d58"/><path d="M-4.330 -2.500L-9.400 -5.700A11 11 0 0 1 9.700 -5L0 -5Z" fill="#db4437"/><circle r="5" fill="#f1f1f1"/><circle r="4" fill="#4285f4"/></svg>
<div class="a" style="left:399.2px;top:717.600px;width:41.0px;height:2.400px;background:#9dd2f3"></div>
<div class="a" style="left:445.2px;top:717.600px;width:48.6px;height:2.400px;background:#9dd2f3"></div>
<div class="a" style="left:498.8px;top:717.600px;width:32.2px;height:2.400px;background:#9dd2f3"></div>
<div class="a" style="left:531px;top:717.600px;width:8.7px;height:2.400px;background:#7c8d95"></div>
<div class="a" style="left:548.9px;top:717.600px;width:41.1px;height:2.400px;background:#9dd2f3"></div>
<div class="a" style="left:598.8px;top:717.600px;width:32.4px;height:2.400px;background:#9dd2f3"></div>
<div class="a" style="left:631.2px;top:717.600px;width:8.5px;height:2.400px;background:#7c8d95"></div>
<svg style="left:897px;top:690px" width="23" height="19" viewBox="0 0 23 19"><path d="M9.500 0.800A6 6 0 1 0 13.500 9.500A5 5 0 0 1 9.500 0.800Z" fill="#f7c948"/><path d="M5 18.500A4 4 0 0 1 4.500 10.600A5.500 5.500 0 0 1 15 9.500A4.500 4.500 0 0 1 18 18.500Z" fill="#f3f6fa"/><path d="M5 18.500A4 4 0 0 1 3 16H20.500A4.500 4.500 0 0 1 18 18.500Z" fill="#cfdcea"/><circle cx="16.300" cy="3" r="2.800" fill="#e0322b"/><rect x="15.800" y="0.800" width="1" height="2.800" fill="#fff"/></svg>
<svg style="left:1067.500px;top:697px" width="11.500" height="7" viewBox="0 0 11.500 7"><path d="M0.500 6.500L5.750 1L11 6.500" fill="none" stroke="#fff" stroke-width="1.100"/></svg>
<svg style="left:1092.500px;top:692.200px" width="9.500" height="16" viewBox="0 0 9.500 16"><rect x="1.300" y="0" width="6.900" height="11.500" rx="2.200" fill="#f2f2f2"/><rect x="1.300" y="9" width="6.900" height="2.500" rx="1" fill="#b8b8b8"/><path d="M4.750 11.500V14.600M2 15.300H7.500" stroke="#f2f2f2" stroke-width="1.200"/></svg>
<svg style="left:1112.800px;top:694.700px" width="17" height="11.500" viewBox="0 0 17 11.500"><rect x="4.800" y="3.500" width="11.600" height="7" fill="none" stroke="#fff" stroke-width="1"/><rect x="6" y="4.700" width="9.200" height="4.600" fill="#fff"/><path d="M1.500 0V2.500M4 0V2.500M0.500 2.500H5V4.500A2.200 2.200 0 0 1 0.500 4.500ZM2.750 6.500V8.500H4.800" fill="none" stroke="#fff" stroke-width="1"/></svg>
<svg style="left:1140px;top:695.300px" width="12" height="12" viewBox="0 0 12 12"><g fill="none" stroke="#e8e8e8" stroke-width="1.100"><path d="M0.600 12A11.400 11.400 0 0 1 12 0.600" opacity=".55"/><path d="M4 12A8 8 0 0 1 12 4"/><path d="M7.200 12A4.800 4.800 0 0 1 12 7.200"/></g><circle cx="11" cy="11" r="1.100" fill="#e8e8e8"/></svg>
<svg style="left:1238.400px;top:692.200px" width="17" height="15.500" viewBox="0 0 17 15.500"><path d="M0 0H16.600V11.500H5L0 15.500Z" fill="#fff"/><path d="M3 3.200H13.600M3 5.700H13.600M3 8.200H10" stroke="#16223e" stroke-width="0.900"/></svg>
<div class="a" style="left:1247.500px;top:701.700px;width:13px;height:13px;border-radius:50%;background:#1b1f27;border:1.300px solid #e9e9e9"></div>
<span class="t" style="left:1251.600px;top:704px;font-size:8.500px;line-height:9px;font-weight:bold;color:#fff">1</span>
<div class="a" style="left:1276.500px;top:680px;width:1px;height:40px;background:#5b6878"></div>
<span class="t" style="left:44.5px;top:10.21px;font-size:11.8px;color:#ffffff;width:47px;overflow:hidden;-webkit-mask-image:linear-gradient(to right,#000 55%,transparent 97%);mask-image:linear-gradient(to right,#000 55%,transparent 97%);">Maizzz&amp;Ul</span>
<span class="t" style="left:156px;top:10.21px;font-size:11.8px;color:#ffffff;width:47px;overflow:hidden;-webkit-mask-image:linear-gradient(to right,#000 55%,transparent 97%);mask-image:linear-gradient(to right,#000 55%,transparent 97%);">google m</span>
<span class="t" style="left:268px;top:10.21px;font-size:11.8px;color:#ffffff;width:47px;overflow:hidden;-webkit-mask-image:linear-gradient(to right,#000 55%,transparent 97%);mask-image:linear-gradient(to right,#000 55%,transparent 97%);">Date pick</span>
<span class="t" style="left:380px;top:10.21px;font-size:11.8px;color:#ffffff;width:47px;overflow:hidden;-webkit-mask-image:linear-gradient(to right,#000 55%,transparent 97%);mask-image:linear-gradient(to right,#000 55%,transparent 97%);">Assignme</span>
<span class="t" style="left:491px;top:10.21px;font-size:11.8px;color:#ffffff;width:47px;overflow:hidden;-webkit-mask-image:linear-gradient(to right,#000 55%,transparent 97%);mask-image:linear-gradient(to right,#000 55%,transparent 97%);">Assignme</span>
<span class="t" style="left:602px;top:10.21px;font-size:11.8px;color:#ffffff;width:47px;overflow:hidden;-webkit-mask-image:linear-gradient(to right,#000 55%,transparent 97%);mask-image:linear-gradient(to right,#000 55%,transparent 97%);">03 Proble</span>
<span class="t" style="left:713px;top:10.21px;font-size:11.8px;color:#ffffff;width:47px;overflow:hidden;-webkit-mask-image:linear-gradient(to right,#000 55%,transparent 97%);mask-image:linear-gradient(to right,#000 55%,transparent 97%);">04 Needf</span>
<span class="t" style="left:824.5px;top:10.21px;font-size:11.8px;color:#ffffff;width:47px;overflow:hidden;-webkit-mask-image:linear-gradient(to right,#000 55%,transparent 97%);mask-image:linear-gradient(to right,#000 55%,transparent 97%);">16 Digital</span>
<span class="t" style="left:935.5px;top:10.21px;font-size:11.8px;color:#ffffff;width:47px;overflow:hidden;-webkit-mask-image:linear-gradient(to right,#000 55%,transparent 97%);mask-image:linear-gradient(to right,#000 55%,transparent 97%);">[582 Inter</span>
<span class="t" style="left:142.5px;top:44.45px;font-size:14px;color:#ffffff;letter-spacing:-0.090px;">docs.google.com</span>
<span class="t" style="left:247px;top:44.45px;font-size:14px;color:#b9c8de;letter-spacing:0.230px;">/presentation/d/</span>
<span class="t" style="left:347.5px;top:44.45px;font-size:14px;color:#b9c8de;letter-spacing:-0.241px;">1-h-cLshnhsR_</span>
<span class="t" style="left:439.5px;top:44.45px;font-size:14px;color:#b9c8de;letter-spacing:-0.328px;">mVZnE09-</span>
<span class="t" style="left:504px;top:44.45px;font-size:14px;color:#b9c8de;letter-spacing:-0.760px;">iYazJ-</span>
<span class="t" style="left:537.5px;top:44.45px;font-size:14px;color:#b9c8de;letter-spacing:-0.758px;">WI5ICQ1f-</span>
<span class="t" style="left:597px;top:44.45px;font-size:14px;color:#b9c8de;letter-spacing:-0.170px;">yz4FTLhQ</span>
<span class="t" style="left:661px;top:44.45px;font-size:14px;color:#b9c8de;letter-spacing:-0.112px;">/edit#slide=id.g1084ea6a23c_0_10</span>
<span class="t" style="left:57px;top:80.66px;font-size:14.5px;color:#202124;letter-spacing:0.013px;">[582 Interaction Design] Final presentation</span>
<span class="t" style="left:57px;top:103.99px;font-size:11.5px;color:#202124;letter-spacing:-0.133px;">File</span>
<span class="t" style="left:86px;top:103.99px;font-size:11.5px;color:#202124;letter-spacing:-0.082px;">Edit</span>
<span class="t" style="left:117px;top:103.99px;font-size:11.5px;color:#202124;letter-spacing:-0.055px;">View</span>
<span class="t" style="left:153px;top:103.99px;font-size:11.5px;color:#202124;letter-spacing:0.039px;">Insert</span>
<span class="t" style="left:194px;top:103.99px;font-size:11.5px;color:#202124;letter-spacing:-0.070px;">Format</span>
<span class="t" style="left:242px;top:103.99px;font-size:11.5px;color:#202124;letter-spacing:-0.216px;">Slide</span>
<span class="t" style="left:278px;top:103.99px;font-size:11.5px;color:#202124;letter-spacing:-0.132px;">Arrange</span>
<span class="t" style="left:330px;top:103.99px;font-size:11.5px;color:#202124;letter-spacing:0.128px;">Tools</span>
<span class="t" style="left:369px;top:103.99px;font-size:11.5px;color:#202124;letter-spacing:-0.121px;">Add-ons</span>
<span class="t" style="left:422.5px;top:103.99px;font-size:11.5px;color:#202124;letter-spacing:-0.039px;">Help</span>
<span class="t" style="left:463px;top:103.99px;font-size:11.5px;color:#6f7479;letter-spacing:-0.113px;text-decoration:underline;text-decoration-color:#9aa0a6;text-underline-offset:2px;">Last edit was 7 minutes ago</span>
<span class="t" style="left:1078px;top:89.89px;font-size:11.5px;color:#202124;letter-spacing:0.194px;">Present</span>
<span class="t" style="left:1178.5px;top:89.89px;font-size:11.5px;color:#202124;letter-spacing:-0.138px;-webkit-text-stroke:0.350px #202124;">Share</span>
<span class="t" style="left:374.5px;top:132.84px;font-size:9.5px;color:#3c4043;letter-spacing:0.030px;-webkit-text-stroke:0.150px #3c4043;">Background</span>
<span class="t" style="left:443.75px;top:132.84px;font-size:9.5px;color:#3c4043;letter-spacing:-0.047px;-webkit-text-stroke:0.150px #3c4043;">Layout</span>
<span class="t" style="left:497px;top:132.84px;font-size:9.5px;color:#3c4043;letter-spacing:-0.166px;-webkit-text-stroke:0.150px #3c4043;">Theme</span>
<span class="t" style="left:543px;top:132.84px;font-size:9.5px;color:#3c4043;letter-spacing:0.114px;-webkit-text-stroke:0.150px #3c4043;">Transition</span>
<span class="t" style="left:1037px;top:138.53px;font-size:13px;color:#202124;letter-spacing:0.495px;-webkit-text-stroke:0.250px #202124;">Motion</span>
<span class="t" style="left:1008px;top:185.18px;font-size:11px;color:#202124;letter-spacing:0.174px;-webkit-text-stroke:0.150px #202124;">Slide Transition</span>
<span class="t" style="left:1059px;top:233.96px;font-size:10.5px;color:#3c4043;letter-spacing:0.223px;">None</span>
<span class="t" style="left:1008px;top:281.18px;font-size:11px;color:#202124;letter-spacing:0.491px;-webkit-text-stroke:0.150px #202124;">Object Animations</span>
<span class="t" style="left:1030px;top:324.68px;font-size:11px;color:#b4b7bb;letter-spacing:0.492px;">Select an object to animate</span>
<span class="t" style="left:1028.5px;top:372.18px;font-size:11px;color:#b4b7bb;letter-spacing:-0.102px;">Play</span>
<span class="t" style="left:19.5px;top:160.54px;font-size:9.5px;color:#444746;">1</span>
<span class="t" style="left:19.5px;top:242.04px;font-size:9.5px;color:#444746;">2</span>
<span class="t" style="left:19.5px;top:323.04px;font-size:9.5px;color:#444746;">3</span>
<span class="t" style="left:19.5px;top:404.54px;font-size:9.5px;color:#444746;">4</span>
<span class="t" style="left:78px;top:344.35px;font-size:18px;color:#2a2a2a;letter-spacing:-0.344px;">30%</span>
<span class="t" style="left:517px;top:365.06px;font-size:26.5px;color:#1f1f1f;font-family:'DejaVu Sans','Liberation Sans',sans-serif;letter-spacing:-0.722px;">Phil Mendez</span>
<span class="t" style="left:293.5px;top:155.11px;font-size:8.5px;color:#5f6368;">1</span>
<span class="t" style="left:367.5px;top:155.11px;font-size:8.5px;color:#5f6368;">2</span>
<span class="t" style="left:441.0px;top:155.11px;font-size:8.5px;color:#5f6368;">3</span>
<span class="t" style="left:515.0px;top:155.11px;font-size:8.5px;color:#5f6368;">4</span>
<span class="t" style="left:589.0px;top:155.11px;font-size:8.5px;color:#5f6368;">5</span>
<span class="t" style="left:663.0px;top:155.11px;font-size:8.5px;color:#5f6368;">6</span>
<span class="t" style="left:737.0px;top:155.11px;font-size:8.5px;color:#5f6368;">7</span>
<span class="t" style="left:811.0px;top:155.11px;font-size:8.5px;color:#5f6368;">8</span>
<span class="t" style="left:885.0px;top:155.11px;font-size:8.5px;color:#5f6368;">9</span>
<span class="t" style="left:189.3px;top:625.57px;font-size:11.7px;color:#3c4043;">Click to add speaker notes</span>
<span class="t" style="left:937px;top:654.74px;font-size:9.5px;color:#8a8e93;letter-spacing:0.040px;">Explore</span>
<span class="t" style="left:88px;top:692.98px;font-size:15px;color:#dedede;letter-spacing:-0.030px;">Type here to search</span>
<span class="t" style="left:928.4px;top:693.95px;font-size:14px;color:#ffffff;letter-spacing:-0.684px;">55°F</span>
<span class="t" style="left:963.7px;top:693.95px;font-size:14px;color:#ffffff;letter-spacing:0.091px;">Mostly cloudy</span>
<span class="t" style="left:1169px;top:684.40px;font-size:12px;color:#ffffff;letter-spacing:0.110px;">5:19 AM</span>
<span class="t" style="left:1161.2px;top:703.30px;font-size:12px;color:#ffffff;letter-spacing:0.094px;">12/16/2021</span>
<!-- WEBCAM-START --><svg style="left:0;top:0" width="1280" height="720" viewBox="0 0 1280 720">
<defs>
<clipPath id="wc"><circle cx="145.600" cy="534.200" r="137.200"/></clipPath>
<linearGradient id="wbg" x1="0" y1="0" x2="1" y2="0.300"><stop offset="0" stop-color="#e5dedd"/><stop offset="0.450" stop-color="#ddd4d4"/><stop offset="1" stop-color="#d6cccd"/></linearGradient>
<radialGradient id="skin" cx="0.500" cy="0.350" r="0.700"><stop offset="0" stop-color="#eac2aa"/><stop offset="0.600" stop-color="#dea98f"/><stop offset="1" stop-color="#c98f76"/></radialGradient>
<linearGradient id="shirt" x1="0" y1="0" x2="1" y2="0"><stop offset="0" stop-color="#e8d8c4"/><stop offset="0.500" stop-color="#e5d4be"/><stop offset="1" stop-color="#e0ceb7"/></linearGradient>
<filter id="b1" x="-20%" y="-20%" width="140%" height="140%"><feGaussianBlur stdDeviation="0.900"/></filter>
<filter id="b2" x="-20%" y="-20%" width="140%" height="140%"><feGaussianBlur stdDeviation="2.500"/></filter>
<filter id="b3" x="-30%" y="-30%" width="160%" height="160%"><feGaussianBlur stdDeviation="6"/></filter>
<radialGradient id="wlight" gradientUnits="userSpaceOnUse" cx="35" cy="590" r="110"><stop offset="0" stop-color="#f3eeec" stop-opacity=".85"/><stop offset="1" stop-color="#f3eeec" stop-opacity="0"/></radialGradient>
</defs>
<g clip-path="url(#wc)">
<rect x="0" y="390" width="300" height="300" fill="url(#wbg)"/>
<rect x="0" y="390" width="300" height="300" fill="url(#wlight)"/>
<!-- shirt -->
<path d="M0 690V640C12 618 40 604 60 596L99.800 577L107 563L139 597L172.500 563L177.600 579L215 594C235 601 254 610 290 640V690Z" fill="url(#shirt)" filter="url(#b1)"/>
<path d="M20 690C30 650 50 625 80 600L60 690Z" fill="#d6c3aa" opacity=".45" filter="url(#b2)"/>
<path d="M215 600C240 620 255 650 260 690H230C232 655 225 625 215 600Z" fill="#d3c0a7" opacity=".4" filter="url(#b2)"/>
<!-- neck -->
<path d="M107 540H172V564L139 598L107 564Z" fill="#d09a82" filter="url(#b1)"/>
<path d="M107 552C118 566 160 566 172 552V564L139 598L107 564Z" fill="#b97f68" opacity=".55" filter="url(#b2)"/>
<path d="M128 566C134 580 144 580 150 566L139 596Z" fill="#dcaa92" opacity=".6" filter="url(#b2)"/>
<!-- collar -->
<path d="M106.600 563.300L99.800 577L125 623.600L139 597.300Z" fill="#e6d6c1" stroke="#bfa98c" stroke-width="0.700"/>
<path d="M172.700 563.300L177.600 579L161 622.600L139 597.300Z" fill="#e5d4be" stroke="#bfa98c" stroke-width="0.700"/>
<path d="M106.600 563.300L139 597.300L172.700 563.300" fill="none" stroke="#8f6a52" stroke-width="1" opacity=".7" filter="url(#b1)"/>
<path d="M135 604V690M153 610V690" stroke="#d1bea5" stroke-width="1" opacity=".8"/>
<circle cx="124" cy="616.800" r="1.900" fill="#f4ece0" stroke="#c6b298" stroke-width="0.500"/>
<circle cx="159" cy="615.800" r="1.900" fill="#f4ece0" stroke="#c6b298" stroke-width="0.500"/>
<circle cx="139.700" cy="606" r="1.700" fill="#efe5d6" stroke="#c6b298" stroke-width="0.500"/>
<circle cx="144.500" cy="647" r="2.400" fill="#f1e8da" stroke="#c6b298" stroke-width="0.600"/>
<!-- ears -->
<ellipse cx="96.500" cy="508" rx="5" ry="10" fill="#d39c84" filter="url(#b1)"/>
<ellipse cx="190" cy="508" rx="5" ry="10" fill="#d39c84" filter="url(#b1)"/>
<!-- hair back -->
<path d="M100 500L104 450L143 436L182 450L188 500Z" fill="#503827"/>
<!-- face -->
<path d="M104 462C104 446 120 438 143 438C168 438 184 446 184 464C185 478 186 492 185.500 505C185 518 184.500 526 183 532C180 544 174 552 165 558C155 564 131 564 122 558C112 552 105 542 102 530C100 522 100 514 99.800 505C99.500 492 102 478 104 462Z" fill="url(#skin)" filter="url(#b1)"/>
<path d="M178 470C184 490 186 520 178 545C186 530 188 495 184 466Z" fill="#c08a72" opacity=".5" filter="url(#b2)"/>
<!-- cheeks -->
<ellipse cx="111" cy="514" rx="9" ry="8" fill="#dd8f7c" opacity=".4" filter="url(#b2)"/>
<ellipse cx="173" cy="514" rx="9" ry="8" fill="#d98873" opacity=".4" filter="url(#b2)"/>
<ellipse cx="142" cy="455" rx="26" ry="10" fill="#f2d3c0" opacity=".6" filter="url(#b2)"/>
<!-- hair front curls -->
<path d="M97.0 504.0C95.0 506.1 90.8 513.5 88.7 512.5C86.6 511.5 86.0 502.2 84.6 498.0C83.2 493.8 80.8 492.4 80.4 487.5C80.1 482.6 81.8 474.6 82.5 468.7C83.2 462.8 82.8 457.2 84.6 452.0C86.3 446.8 90.3 441.7 93.0 437.5C95.7 433.3 97.9 430.5 101.0 427.0C104.1 423.5 108.2 419.1 111.7 416.7C115.2 414.3 118.5 412.7 122.0 412.5C125.5 412.3 129.0 415.6 132.5 415.6C136.0 415.6 138.8 412.3 143.0 412.5C147.2 412.7 153.3 415.5 157.5 416.7C161.7 417.9 164.2 418.1 168.0 419.8C171.8 421.5 177.0 424.1 180.4 427.0C183.8 429.9 186.3 433.3 188.7 437.5C191.1 441.7 192.6 447.8 195.0 452.0C197.4 456.2 200.8 459.4 203.0 462.5C205.2 465.6 208.1 467.4 208.5 470.8C208.9 474.2 207.0 479.2 205.4 483.0C203.8 486.8 201.1 490.5 199.0 493.7C196.9 496.9 194.7 500.3 193.0 502.0C191.3 503.7 189.8 504.3 188.7 504.0C187.6 503.7 187.4 502.8 186.7 500.0C186.0 497.2 185.1 492.4 184.6 487.5C184.1 482.6 184.6 475.7 183.5 470.8C182.4 465.9 180.6 461.8 178.3 458.0C176.1 454.2 173.5 450.7 170.0 448.0C166.5 445.3 162.0 442.9 157.5 441.7C153.0 440.5 147.2 441.1 143.0 440.6C138.8 440.1 136.0 438.3 132.5 438.5C129.0 438.7 125.5 439.4 122.0 441.7C118.5 443.9 114.6 447.8 111.7 452.0C108.8 456.2 105.9 461.5 104.4 466.7C103.0 471.9 103.6 477.4 103.0 483.0C102.4 488.6 102.0 496.5 101.0 500.0C100.0 503.5 99.0 501.9 97.0 504.0Z" fill="#573e2b" stroke="#573e2b" stroke-width="1.500" stroke-linejoin="round" filter="url(#b1)"/>
<path d="M104 436C112 424 126 418 140 419C128 424 116 432 110 444Z" fill="#7d5a3f" opacity=".75" filter="url(#b1)"/>
<path d="M150 419C166 420 180 428 188 442C178 434 164 428 150 426Z" fill="#73523a" opacity=".7" filter="url(#b1)"/>
<path d="M88 462C92 452 98 446 104 444C98 452 94 464 94 478Z" fill="#73523a" opacity=".6" filter="url(#b1)"/>
<path d="M196 462C200 470 200 480 196 490" stroke="#73523a" stroke-width="2" fill="none" opacity=".6" filter="url(#b1)"/>
<g fill="#573e2b" filter="url(#b1)"><circle cx="88.5" cy="508.2" r="3.6"/><circle cx="84.3" cy="498.1" r="3.3"/><circle cx="81.2" cy="487.6" r="4.2"/><circle cx="82.2" cy="468.7" r="3.1"/><circle cx="85.3" cy="451.9" r="4.0"/><circle cx="92.7" cy="437.4" r="3.7"/><circle cx="100.8" cy="427.8" r="3.1"/><circle cx="111.5" cy="419.5" r="3.9"/><circle cx="121.9" cy="415.7" r="3.1"/><circle cx="132.4" cy="417.3" r="3.8"/><circle cx="143.0" cy="415.2" r="3.1"/><circle cx="157.6" cy="418.7" r="3.2"/><circle cx="168.2" cy="421.7" r="3.8"/><circle cx="180.6" cy="428.8" r="4.5"/><circle cx="189.0" cy="438.3" r="3.2"/><circle cx="195.3" cy="451.9" r="3.4"/><circle cx="202.3" cy="462.5" r="4.1"/><circle cx="206.8" cy="471.8" r="4.7"/><circle cx="204.3" cy="483.1" r="4.0"/><circle cx="198.3" cy="493.8" r="3.7"/><circle cx="193.2" cy="502.2" r="4.8"/></g>
<g fill="none" stroke-linecap="round" filter="url(#b1)"><path d="M96 446C100 438 108 432 116 430" stroke="#7a583e" stroke-width="2.2" opacity="0.7"/><path d="M90 466C90 458 94 450 100 446" stroke="#6d4d36" stroke-width="2" opacity="0.7"/><path d="M86 488C84 480 86 472 90 468" stroke="#6d4d36" stroke-width="2" opacity="0.6"/><path d="M112 426C120 420 130 420 138 424" stroke="#82603f" stroke-width="2.4" opacity="0.65"/><path d="M146 420C156 420 166 424 174 430" stroke="#7a583e" stroke-width="2.2" opacity="0.65"/><path d="M178 434C186 440 190 448 192 456" stroke="#6d4d36" stroke-width="2" opacity="0.65"/><path d="M196 460C202 466 204 474 200 482" stroke="#7a583e" stroke-width="2" opacity="0.6"/><path d="M120 436C128 430 140 430 148 434" stroke="#3a271b" stroke-width="2" opacity="0.5"/><path d="M156 432C166 434 174 440 178 448" stroke="#3a271b" stroke-width="2" opacity="0.5"/><path d="M100 456C102 450 106 446 110 444" stroke="#3a271b" stroke-width="1.8" opacity="0.5"/><path d="M190 470C194 478 194 488 190 496" stroke="#3a271b" stroke-width="1.8" opacity="0.5"/><path d="M92 500C90 494 90 490 92 486" stroke="#3a271b" stroke-width="1.6" opacity="0.5"/></g>
<path d="M112 421C122 415 136 414 146 416C158 416 170 420 178 427" stroke="#8a6a50" stroke-width="2" fill="none" opacity=".55" filter="url(#b1)"/>
<path d="M143.500 412.500L142.800 408.500" stroke="#4b3425" stroke-width="0.800" fill="none"/>
<!-- eyebrows -->
<path d="M107.500 479.500C111 475 118 473.300 123 474.500C128 475.500 132 477.500 134.600 479.300" stroke="#5a3f31" stroke-width="2.600" fill="none" stroke-linecap="round" filter="url(#b1)"/>
<path d="M152 478.300C156 475.500 161 474.500 165 475.500C170 476.500 175 479 178.500 482.500" stroke="#5a3f31" stroke-width="2.600" fill="none" stroke-linecap="round" filter="url(#b1)"/>
<!-- eye sockets -->
<ellipse cx="122" cy="489" rx="11" ry="5" fill="#c08670" opacity=".45" filter="url(#b2)"/>
<ellipse cx="164.500" cy="490" rx="11" ry="5" fill="#c08670" opacity=".45" filter="url(#b2)"/>
<!-- eyes -->
<path d="M113 489.500Q122 484.500 132.500 488.500Q123 490.800 113 489.500Z" fill="#3f2a20" filter="url(#b1)"/>
<path d="M154.700 489.500Q164 485.500 172.800 490.500Q163 492 154.700 489.500Z" fill="#3f2a20" filter="url(#b1)"/>
<!-- glasses -->
<ellipse cx="120.700" cy="491.400" rx="14.800" ry="14.800" fill="#fff" fill-opacity=".08" stroke="#86634f" stroke-width="1.200"/>
<ellipse cx="165.800" cy="492" rx="15.800" ry="15.200" fill="#fff" fill-opacity=".08" stroke="#86634f" stroke-width="1.200"/>
<path d="M135.300 487.500Q143 480.500 150.200 487.500" stroke="#d2ad72" stroke-width="1.300" fill="none"/>
<path d="M106 489L99.500 487M181.500 489L187 487.500" stroke="#c9a35e" stroke-width="1"/>
<circle cx="107.500" cy="483.500" r="1" fill="#e3c48c"/><circle cx="180" cy="484.500" r="1" fill="#e3c48c"/>
<!-- nose -->
<path d="M138 482C136.500 494 133 503 131.500 508" stroke="#c58f78" stroke-width="1.800" fill="none" opacity=".65" filter="url(#b1)"/>
<ellipse cx="142.500" cy="503" rx="6" ry="7" fill="#f0cdb9" opacity=".7" filter="url(#b2)"/>
<path d="M131.500 510C134 514.500 139 514 142.500 515C146 514 151 514.500 153.300 509.500" stroke="#a96a56" stroke-width="1.800" fill="none" filter="url(#b1)"/>
<ellipse cx="135" cy="511.500" rx="2.400" ry="1.400" fill="#8a5040" opacity=".8" filter="url(#b1)"/>
<ellipse cx="150" cy="511.500" rx="2.200" ry="1.300" fill="#8a5040" opacity=".7" filter="url(#b1)"/>
<!-- smile lines -->
<path d="M127 506.700C120.500 512 118 518 119.300 524M156 506.700C162 512 164.500 517 163 522.500" stroke="#b57e68" stroke-width="1.500" fill="none" opacity=".85" filter="url(#b1)"/>
<!-- mouth -->
<path d="M119.300 524.300C128 526.500 134 527 141 527C148 527 155 526.800 162.400 525.500C159 532 152 534.500 141.500 534.500C131 534.500 123 531.500 119.300 524.300Z" fill="#86463d"/>
<path d="M122 525.500C130 527.500 135 527.800 141 527.800C148 527.800 154 527.500 160 526.500C157 530.500 150 532 141.500 532C133 532 126 530 122 525.500Z" fill="#ecdccc"/>
<path d="M127 534C134 538.500 150 538.500 156.500 533.500" stroke="#d4908a" stroke-width="2.400" fill="none" opacity=".85" filter="url(#b1)"/>
<path d="M119.300 524.300C128 526 134 525.800 141 526.200C148 526 155 525.800 162.400 525.500" stroke="#b4705f" stroke-width="1" fill="none" opacity=".9"/>
<!-- chin -->
<ellipse cx="142" cy="549" rx="12" ry="6" fill="#eec6b0" opacity=".6" filter="url(#b2)"/>
</g>
</svg>
<!-- WEBCAM-END -->
<div class="a" style="left:256px;top:627.700px;width:154px;height:38.800px;border-radius:19.400px;background:#202020"></div>
<div class="a" style="left:275px;top:640.300px;width:13px;height:13px;background:#f4603c;border-radius:1px"></div>
<div class="a" style="left:336px;top:636px;width:1px;height:22px;background:#3d3d3d"></div>
<svg style="left:350.500px;top:640.500px" width="9.500" height="13" viewBox="0 0 9.500 13"><rect x="0" y="0" width="3.200" height="13" rx="1.200" fill="#fff"/><rect x="6.300" y="0" width="3.200" height="13" rx="1.200" fill="#fff"/></svg>
<svg style="left:378.500px;top:639.500px" width="13" height="15" viewBox="0 0 13 15"><path d="M0.500 3H12.500M4.300 3V1.300A0.600 0.600 0 0 1 4.900 0.700H8.100A0.600 0.600 0 0 1 8.700 1.300V3" fill="none" stroke="#fff" stroke-width="1.400"/><path d="M2 3.500V12.600A1.500 1.500 0 0 0 3.500 14.100H9.500A1.500 1.500 0 0 0 11 12.600V3.500" fill="none" stroke="#fff" stroke-width="1.500"/><path d="M5 6V11.500M8 6V11.500" stroke="#fff" stroke-width="1.300"/></svg>
<span class="t" style="left:297.6px;top:641.26px;font-size:10.5px;color:#f3f3f3;font-weight:bold;letter-spacing:1.121px;">0:00</span>
</body></html>
